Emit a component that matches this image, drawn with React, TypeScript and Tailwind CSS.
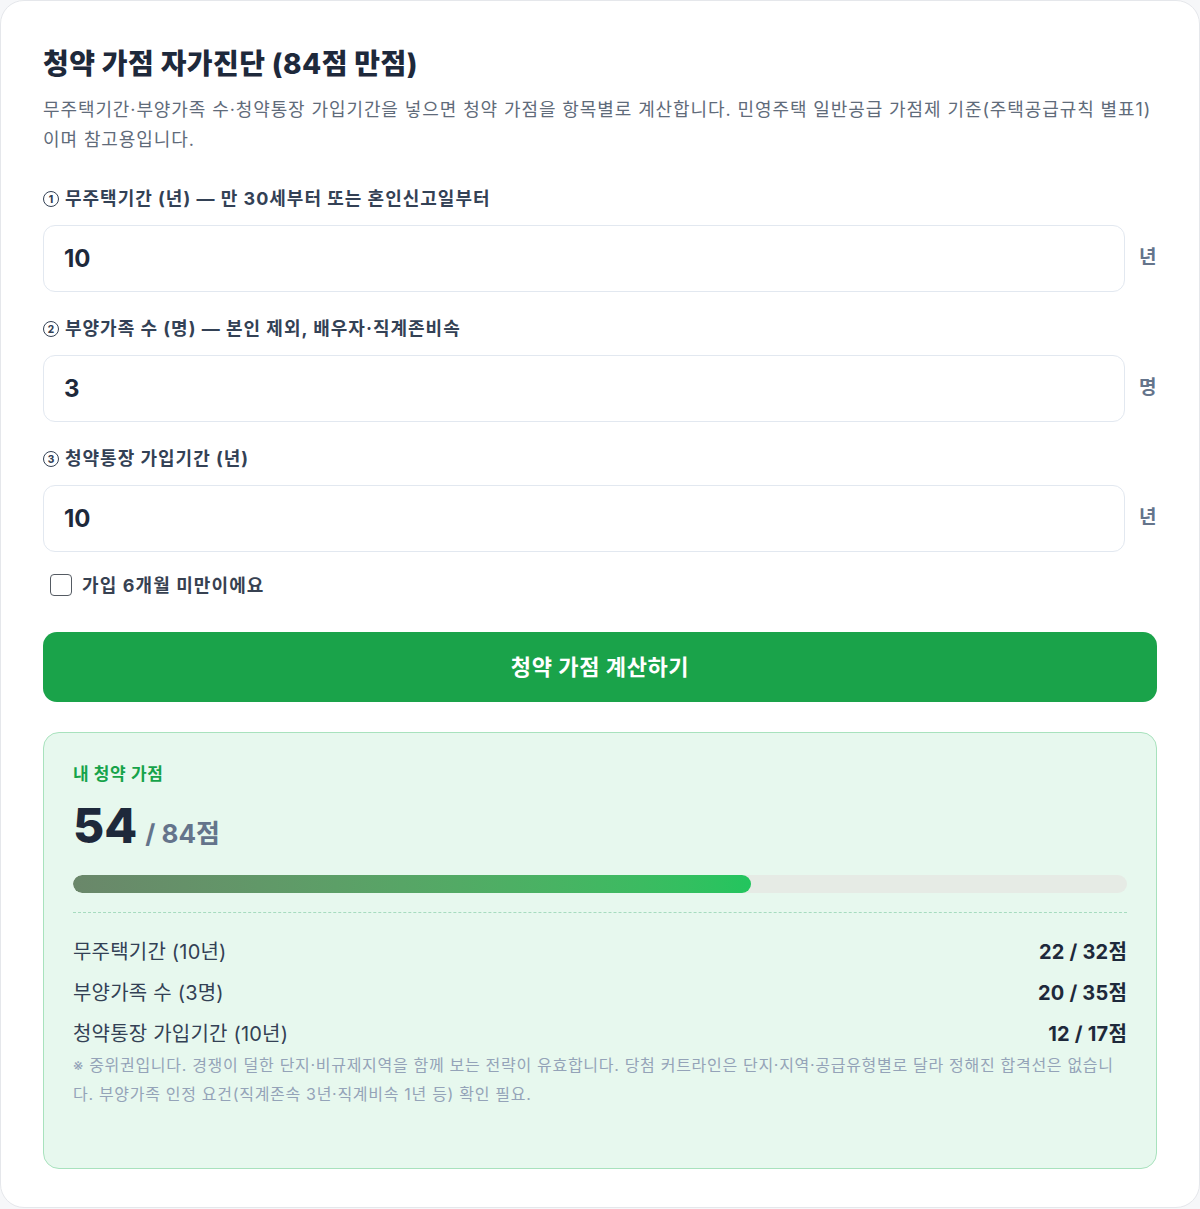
import React, { useState } from "react";

const FONT = {
  fontFamily: 'Inter, "Noto Sans CJK KR", "Noto Sans", sans-serif',
};

// Small outlined circle with a number, used before each field label
function Num({ n }: { n: number }) {
  return (
    <span className="mr-[6px] inline-flex h-[16px] w-[16px] translate-y-[-1px] items-center justify-center rounded-full border-[1.8px] border-[#334155] align-middle text-[10px] leading-none font-extrabold tracking-normal">
      {n}
    </span>
  );
}

type FieldProps = {
  n: number;
  label: string;
  value: string;
  unit: string;
  first?: boolean;
};

function Field({ n, label, value, unit, first }: FieldProps) {
  return (
    <div className={first ? "mt-[31px]" : "mt-[24px]"}>
      <div className="text-[18px] leading-[26px] font-bold text-[#334155] tracking-[1px]">
        <Num n={n} />
        {label}
      </div>
      <div className="mt-[13px] flex items-center gap-[14px]">
        <div className="flex h-[67px] flex-1 items-center rounded-[12px] border border-[#e2e8f0] bg-white px-[20px]">
          <span className="text-[24px] font-bold text-[#1e293b]">{value}</span>
        </div>
        <span className="w-[18px] text-[19px] font-bold text-[#64748b]">{unit}</span>
      </div>
    </div>
  );
}

export default function App() {
  const [under6, setUnder6] = useState(false);
  const total = 54;
  const max = 84;
  const rows = [
    { label: "무주택기간 (10년)", value: "22 / 32점" },
    { label: "부양가족 수 (3명)", value: "20 / 35점" },
    { label: "청약통장 가입기간 (10년)", value: "12 / 17점" },
  ];

  return (
    <div className="min-h-[1209px] bg-[#f6f7f9]" style={FONT}>
      <div className="h-[1208px] rounded-[24px] border border-[#e5e7eb] bg-white px-[42px] pt-[44px]">
        <h1 className="text-[28px] leading-[38px] font-extrabold text-[#1e293b] tracking-[0.4px]">
          청약 가점 자가진단 (84점 만점)
        </h1>
        <p className="mt-[12px] text-[18px] leading-[30px] text-[#5f6b7a] tracking-[0.9px]">
          무주택기간·부양가족 수·청약통장 가입기간을 넣으면 청약 가점을 항목별로 계산합니다. 민영주택 일반공급 가점제 기준(주택공급규칙 별표1)
          이며 참고용입니다.
        </p>

        <Field first n={1} label="무주택기간 (년) — 만 30세부터 또는 혼인신고일부터" value="10" unit="년" />
        <Field n={2} label="부양가족 수 (명) — 본인 제외, 배우자·직계존비속" value="3" unit="명" />
        <Field n={3} label="청약통장 가입기간 (년)" value="10" unit="년" />

        <label className="mt-[20px] flex h-[26px] cursor-pointer items-center gap-[10px] pl-[7px]">
          <span
            onClick={() => setUnder6(!under6)}
            className="h-[22px] w-[22px] rounded-[4px] border-[1.5px] border-[#555b63] bg-white"
          />
          <span className="text-[18px] font-bold text-[#374151] tracking-[1.1px]">가입 6개월 미만이에요</span>
        </label>

        <button className="mt-[34px] flex h-[70px] w-full items-center justify-center rounded-[14px] bg-[#1aa34a] text-[22px] font-bold text-white tracking-[0.6px]">
          청약 가점 계산하기
        </button>

        <div className="mt-[30px] h-[437px] rounded-[16px] border border-[#a8e2bd] bg-[#e7f8ee] px-[29px] pt-[29px]">
          <div className="text-[17px] leading-[24px] font-bold text-[#16a34a] tracking-[0.6px]">내 청약 가점</div>
          <div className="mt-[12px] flex h-[56px] items-baseline gap-[8px] leading-[56px]">
            <span className="text-[48px] font-extrabold text-[#1e293b]">{total}</span>
            <span className="text-[26px] font-bold text-[#64748b]">/ {max}점</span>
          </div>
          <div className="mt-[21px] h-[18px] w-full overflow-hidden rounded-full bg-[#e6ebe5]">
            <div
              className="h-full rounded-full bg-gradient-to-r from-[#6a876a] to-[#22c55e]"
              style={{ width: `${(total / max) * 100}%` }}
            />
          </div>
          <div className="mt-[19px] border-t border-dashed border-[#a6dcbf] pt-[24px]">
            <div className="flex flex-col gap-[11px]">
              {rows.map((r) => (
                <div key={r.label} className="flex h-[30px] items-center justify-between leading-[30px]">
                  <span className="text-[20px] text-[#334155] tracking-[0.2px]">{r.label}</span>
                  <span className="text-[20px] font-bold text-[#1e293b] tracking-[0.2px]">{r.value}</span>
                </div>
              ))}
            </div>
            <p className="mt-[2px] text-[16px] leading-[29px] text-[#94a3b8] tracking-[0.7px]">
              ※ 중위권입니다. 경쟁이 덜한 단지·비규제지역을 함께 보는 전략이 유효합니다. 당첨 커트라인은 단지·지역·공급유형별로 달라 정해진 합격선은 없습니다. 부양가족 인정 요건(직계존속 3년·직계비속 1년 등) 확인 필요.
            </p>
          </div>
        </div>
      </div>
    </div>
  );
}
